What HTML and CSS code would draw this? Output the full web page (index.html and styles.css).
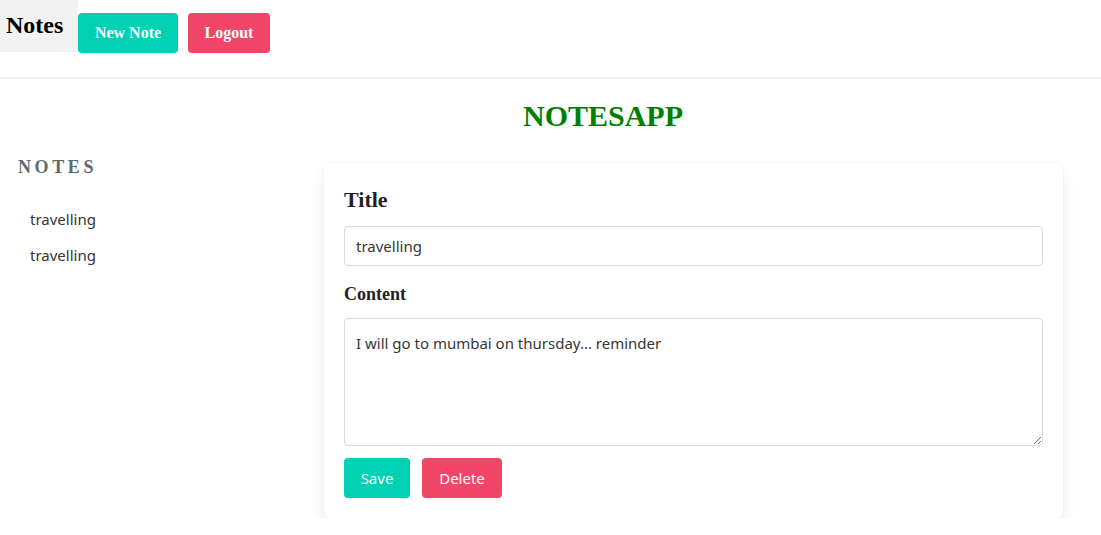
FILE: index.html
```html
<!DOCTYPE html>
<html>
<head>
<meta charset="utf-8">
<link rel="stylesheet" href="styles.css">
</head>
<body>
<header class="topbar">
  <div class="brand">Notes</div>
  <button class="btn btn-primary">New Note</button>
  <button class="btn btn-danger">Logout</button>
</header>
<h1 class="app-title">NOTESAPP</h1>
<div class="layout">
  <aside class="sidebar">
    <p class="menu-label">Notes</p>
    <ul class="menu-list">
      <li>travelling</li>
      <li>travelling</li>
    </ul>
  </aside>
  <main class="main">
    <div class="card">
      <label class="label-title">Title</label>
      <input class="input" type="text" value="travelling">
      <label class="label-content">Content</label>
      <textarea class="textarea">I will go to mumbai on thursday... reminder</textarea>
      <div class="actions">
        <button class="act act-save">Save</button>
        <button class="act act-delete">Delete</button>
      </div>
    </div>
  </main>
</div>
</body>
</html>
```
FILE: styles.css
```css
* { box-sizing: border-box; }
body {
  margin: 0;
  font-family: "Liberation Serif", "Times New Roman", serif;
  background: #fff;
  color: #000;
}
.topbar {
  display: flex;
  align-items: flex-start;
  height: 79px;
  border-bottom: 2px solid #f2f2f2;
}
.brand {
  background: #f2f2f2;
  font-weight: bold;
  font-size: 24px;
  width: 78px;
  height: 52px;
  padding: 11px 0 0 6px;
  line-height: 28px;
}
.btn {
  margin-top: 13px;
  height: 40px;
  border: none;
  border-radius: 4px;
  color: #fff;
  font-family: "Liberation Serif", serif;
  font-weight: bold;
  font-size: 16px;
  padding: 0;
}
.btn-primary { background: #00d1b2; width: 100px; }
.btn-danger { background: #f14668; width: 82px; margin-left: 10px; }
.app-title {
  margin: 20px 0 0;
  padding-left: 105px;
  text-align: center;
  color: #008000;
  font-size: 30px;
  line-height: 34px;
}
.layout {
  display: flex;
  margin-top: 30px;
}
.sidebar {
  width: 324px;
  padding-left: 18px;
}
.menu-label {
  margin: -6px 0 0;
  text-transform: uppercase;
  letter-spacing: 0.2em;
  color: #5b6b6b;
  font-weight: bold;
  font-size: 18px;
}
.menu-list {
  list-style: none;
  margin: 23px 0 0;
  padding: 0 0 0 12px;
  font-family: "Noto Sans", sans-serif;
  font-size: 15px;
  color: #363636;
}
.menu-list li { height: 36px; line-height: 36px; }
.main {
  width: 739px;
}
.card {
  background: #fff;
  border-radius: 6px;
  box-shadow: 0 0.5em 1em -0.125em rgba(10,10,10,0.1), 0 0 0 1px rgba(10,10,10,0.02);
  padding: 20px 20px 20px;
  display: flex;
  flex-direction: column;
}
.label-title {
  font-weight: bold;
  font-size: 22px;
  line-height: 30px;
  color: #222;
  margin-top: 2px;
}
.input, .textarea {
  width: 699px;
  border: 1px solid #dbdbdb;
  border-radius: 4px;
  font-family: "Noto Sans", sans-serif;
  font-size: 15px;
  color: #363636;
  padding: 0 11px;
}
.input { height: 40px; margin-top: 11px; }
.label-content {
  font-weight: bold;
  font-size: 18px;
  line-height: 26px;
  color: #222;
  margin-top: 15px;
}
.textarea {
  height: 128px;
  margin-top: 11px;
  padding-top: 12px;
  line-height: 24px;
  resize: vertical;
}
.actions {
  display: flex;
  gap: 12px;
  margin-top: 12px;
}
.act {
  height: 40px;
  border: none;
  border-radius: 4px;
  color: #fff;
  font-family: "Noto Sans", sans-serif;
  font-size: 15px;
}
.act-save { background: #00d1b2; width: 66px; }
.act-delete { background: #f14668; width: 80px; }
```
